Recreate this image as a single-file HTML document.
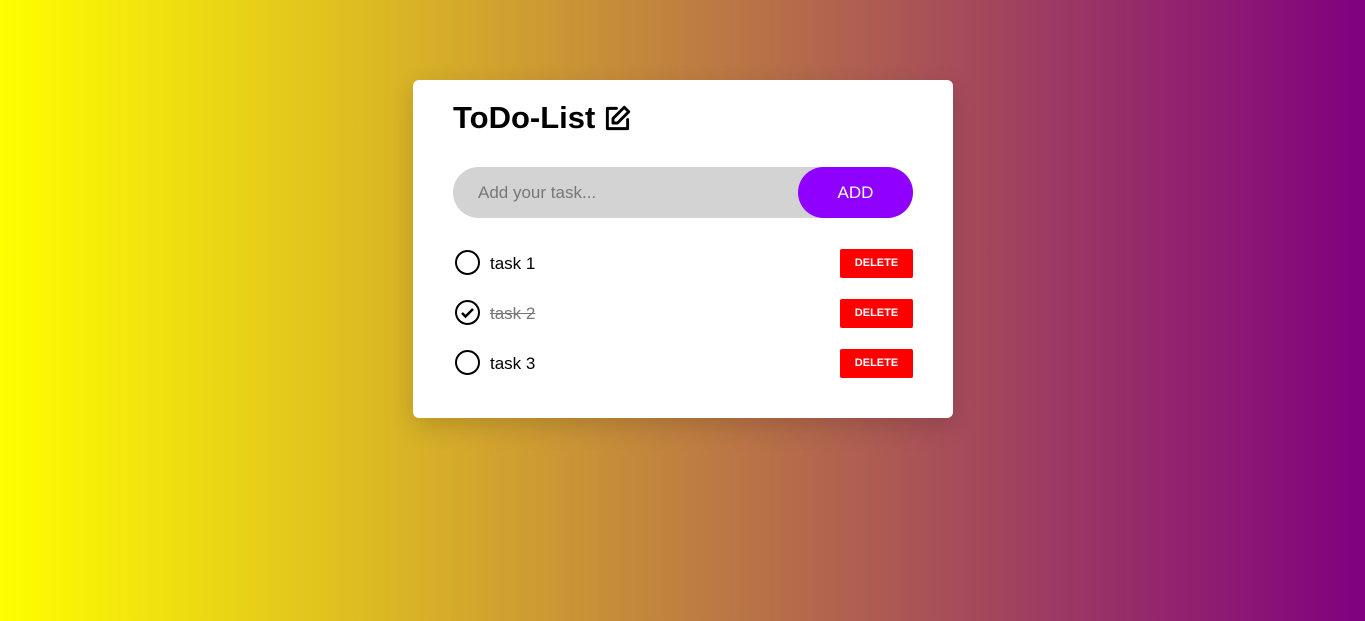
<!DOCTYPE html>
<html><head><style>
html,body{margin:0;height:621px;overflow:hidden}
body{background:linear-gradient(90deg,#ffff00,#800080);font-family:"Liberation Sans",sans-serif}
.card{position:absolute;left:413px;top:80px;width:540px;height:338px;background:#fff;border-radius:6px;box-shadow:0 8px 25px rgba(0,0,0,.15)}
.title{position:absolute;left:40px;top:20px;font-size:31px;font-weight:bold;color:#000;display:flex;align-items:center;gap:9px}
.inp{position:absolute;left:40px;top:87px;width:460px;height:51px;background:#d3d3d3;border-radius:26px}
.inp span{position:absolute;left:25px;top:16px;font-size:17px;color:#777}
.add{position:absolute;right:0;top:0;width:115px;height:51px;background:#8f00ff;border-radius:26px;color:#fff;font-size:17px;text-align:center;line-height:51px}
.row{position:absolute;left:40px;width:460px;height:30px}
.circ{position:absolute;left:2px;top:1px;width:25px;height:25px;border:2.5px solid #000;border-radius:50%;box-sizing:border-box}
.row .t{position:absolute;left:37px;top:5px;font-size:17px;color:#000}
.del{position:absolute;right:0;top:0;width:73px;height:29px;background:#f00;color:#fff;font-size:11px;font-weight:bold;text-align:center;line-height:29px;border-radius:2px}
</style></head><body>
<div class="card">
<div class="title">ToDo-List <svg width="27" height="27" viewBox="0 0 24 24" fill="none" stroke="#000" stroke-width="2.6" stroke-linejoin="round" stroke-linecap="round"><path d="M11 3H3v18h18v-8"/><path d="M18 2l4 4-10 10H8v-4z"/></svg></div>
<div class="inp"><span>Add your task...</span><div class="add">ADD</div></div>
<div class="row" style="top:169px"><div class="circ"></div><div class="t">task 1</div><div class="del">DELETE</div></div>
<div class="row" style="top:219px"><div class="circ"></div><svg style="position:absolute;left:7px;top:8px" width="15" height="12" viewBox="0 0 15 12"><path d="M2 6l3.5 3.5L13 2" fill="none" stroke="#000" stroke-width="2.5"/></svg><div class="t" style="color:#777;text-decoration:line-through">task 2</div><div class="del">DELETE</div></div>
<div class="row" style="top:269px"><div class="circ"></div><div class="t">task 3</div><div class="del">DELETE</div></div>
</div>
</body></html>
